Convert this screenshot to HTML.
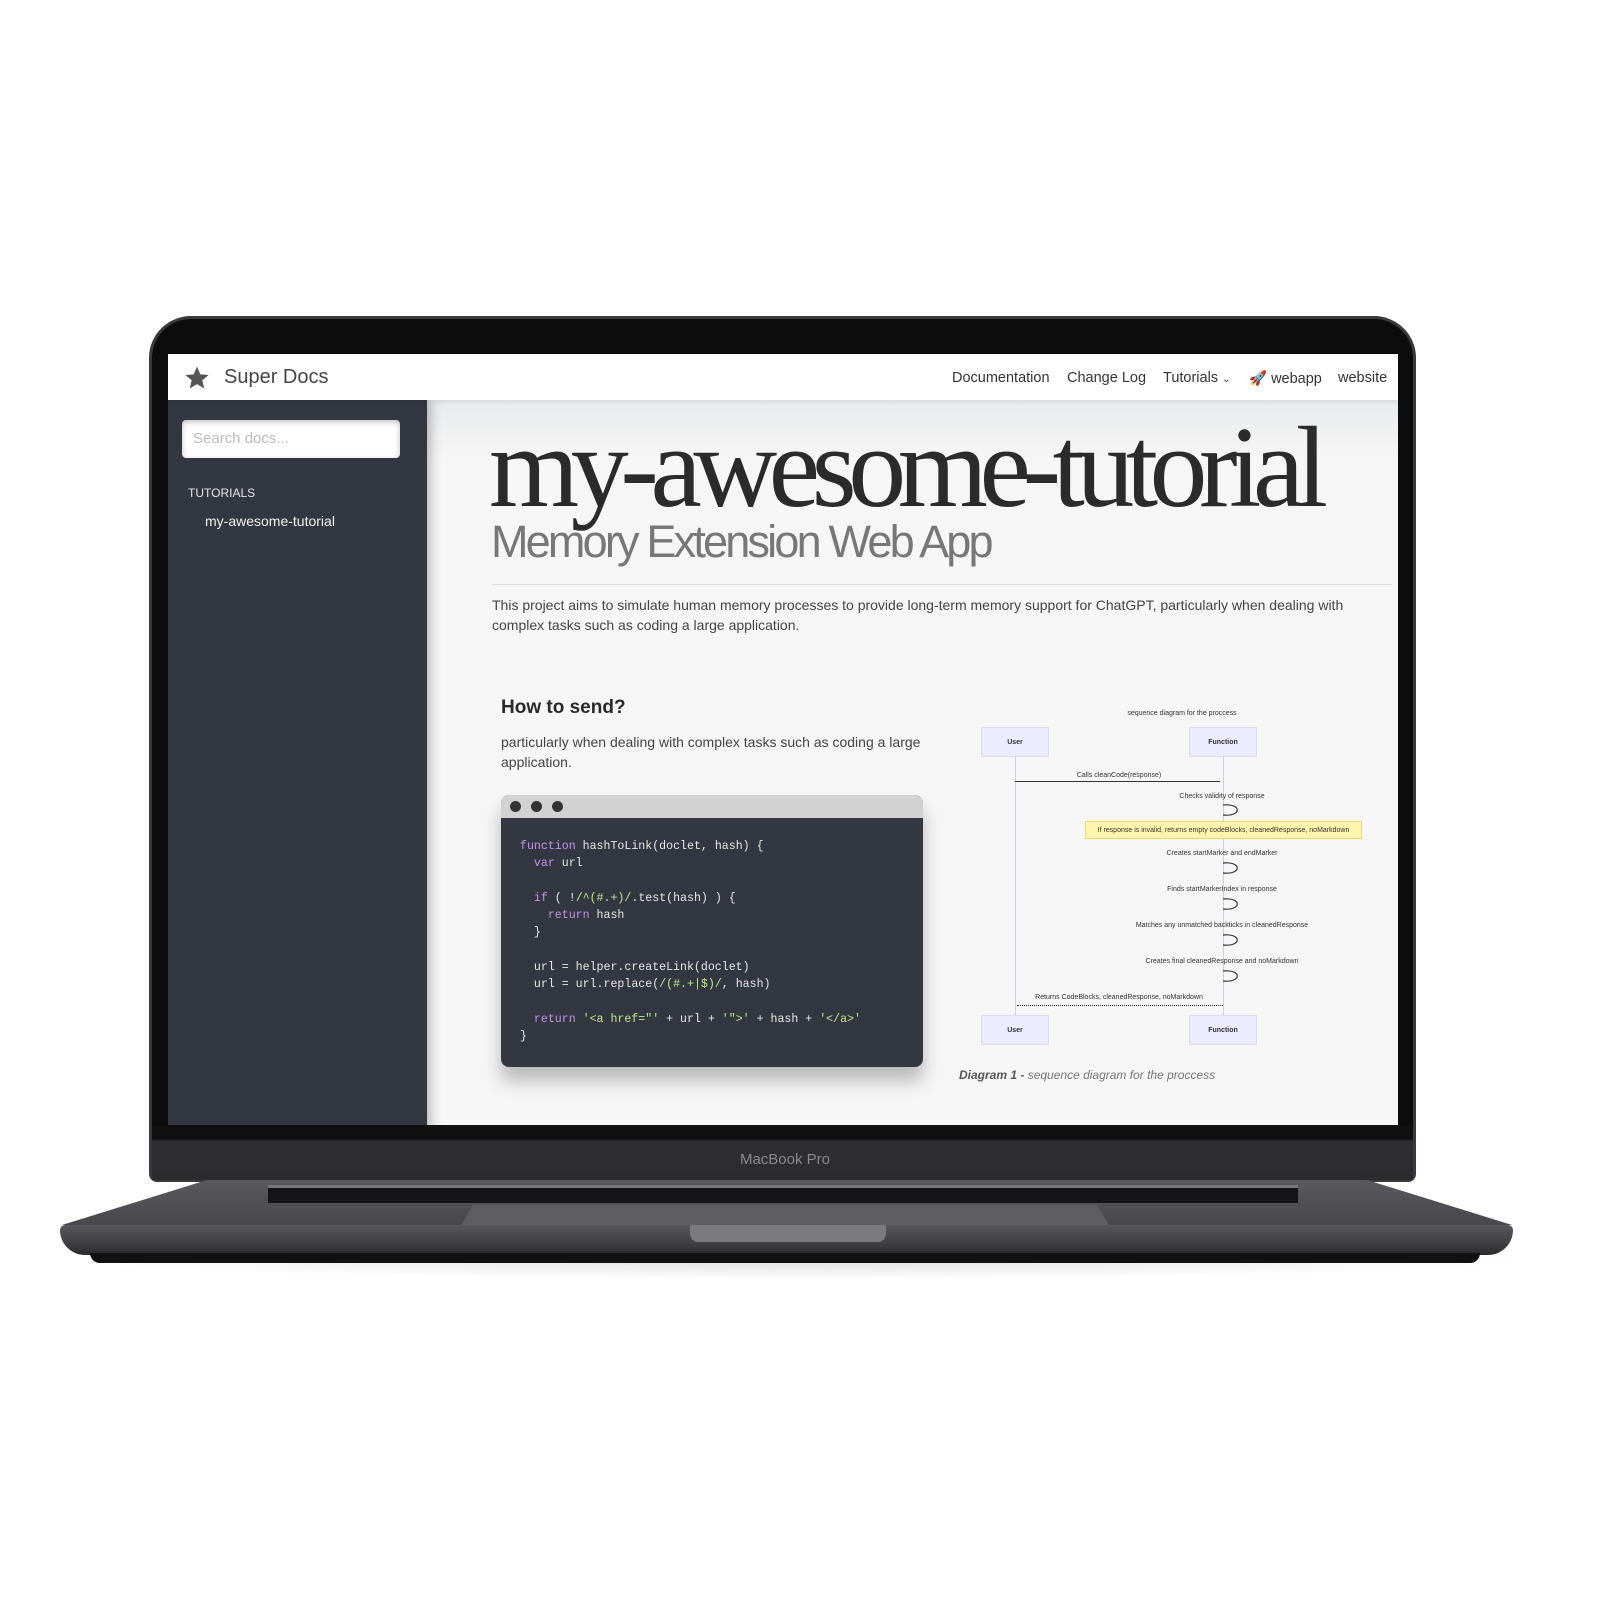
<!DOCTYPE html>
<html><head><meta charset="utf-8"><style>
*{margin:0;padding:0;box-sizing:border-box}
body{width:1600px;height:1600px;background:#fff;position:relative;overflow:hidden;font-family:"Liberation Sans",sans-serif}
.a{position:absolute}
.lid{left:149px;top:316px;width:1267px;height:866px;background:#0c0c0c;border-radius:42px 42px 8px 8px;border:3px solid #3a3a3c}
.chin{left:152px;top:1125px;width:1261px;height:55px;background:linear-gradient(#101010 0,#101010 14px,#2f2f31 16px,#2c2c2e);}
.screen{left:168px;top:354px;width:1230px;height:771px;background:#f6f6f6;overflow:hidden}
.nav{left:0;top:0;width:1230px;height:46px;background:#fff;box-shadow:0 2px 4px rgba(0,0,0,.08);z-index:2}
.side{left:0;top:46px;width:259px;height:730px;background:#333741;box-shadow:4px 0 10px rgba(0,0,0,.25);z-index:1}
.nv{top:16px;font-size:14.5px;color:#333}
.code{font-family:"Liberation Mono",monospace;font-size:11.6px;color:#e8e8e8;white-space:pre;line-height:17.3px}
.k{color:#c792ea}.s{color:#c3e88d}
.dl{font-size:7px;color:#333;text-align:center;white-space:nowrap}
.bx{background:#ececff;border:1px solid #ddd9f5;font-size:7px;font-weight:bold;color:#333;display:flex;align-items:center;justify-content:center}
</style></head><body>
<div class="a" style="left:60px;top:1240px;width:1480px;height:40px;background:radial-gradient(ellipse at center,rgba(0,0,0,.12),rgba(0,0,0,0) 70%)"></div>
<div class="a lid"></div>
<div class="a chin"></div>
<div class="a" style="left:685px;top:1151px;width:200px;text-align:center;color:#8a8a8c;font-size:15px">MacBook Pro</div>
<!-- base -->
<div class="a" style="left:62px;top:1180px;width:1450px;height:45px;background:linear-gradient(#5a5a5e,#48484c);clip-path:polygon(10% 0,90% 0,100% 100%,0 100%)"></div>
<div class="a" style="left:268px;top:1185px;width:1030px;height:18px;background:#151517;border-top:3px solid #77777a"></div>
<div class="a" style="left:460px;top:1205px;width:650px;height:22px;background:#5d5d62;clip-path:polygon(2% 0,98% 0,100% 100%,0 100%)"></div>
<div class="a" style="left:60px;top:1225px;width:1453px;height:30px;background:linear-gradient(#58585c,#404044 60%,#2a2a2c);border-radius:6px 6px 30px 30px"></div>
<div class="a" style="left:690px;top:1225px;width:196px;height:17px;background:#7a7a7f;border-radius:0 0 8px 8px"></div>
<div class="a" style="left:90px;top:1253px;width:1390px;height:10px;background:#111;border-radius:0 0 60px 60px"></div>

<div class="a screen">
 <div class="a nav">
  <svg class="a" style="left:15px;top:11px" width="28" height="26" viewBox="0 0 24 24"><path d="M12 1.5l3.1 7.1 7.6.6-5.8 5 1.8 7.5L12 17.7l-6.7 4 1.8-7.5-5.8-5 7.6-.6z" fill="#555"/></svg>
  <div class="a" style="left:56px;top:12px;font-size:20px;color:#444">Super Docs</div>
  <div class="a nv" style="left:784px">Documentation</div>
  <div class="a nv" style="left:899px">Change Log</div>
  <div class="a nv" style="left:995px">Tutorials <span style="font-size:10px">&#8964;</span></div>
  <div class="a nv" style="left:1081px">🚀 webapp</div>
  <div class="a nv" style="left:1170px">website</div>
 </div>
 <div class="a side">
  <div class="a" style="left:14px;top:20px;width:218px;height:38px;background:#fff;border-radius:4px;box-shadow:inset 0 2px 6px rgba(0,0,0,.25);font-size:15px;color:#bbb;padding:10px 11px">Search docs...</div>
  <div class="a" style="left:20px;top:86px;color:#e6e6e6;font-size:12px">TUTORIALS</div>
  <div class="a" style="left:37px;top:113px;color:#f0f0f0;font-size:14px">my-awesome-tutorial</div>
 </div>
 <div class="a" style="left:259px;top:46px;width:979px;height:60px;background:linear-gradient(#e9eaec,#f6f6f6)"></div>
 <div class="a" style="left:321px;top:44px;font-family:'Liberation Serif',serif;font-size:116px;color:#2b2b2b;letter-spacing:-8.5px;white-space:nowrap;line-height:140px">my-awesome-tutorial</div>
 <div class="a" style="left:323px;top:162px;font-size:45px;color:#777;letter-spacing:-2.8px;white-space:nowrap">Memory Extension Web App</div>
 <div class="a" style="left:324px;top:230px;width:900px;height:1px;background:#ddd"></div>
 <div class="a" style="left:324px;top:241px;font-size:14px;color:#444;line-height:20px;width:880px">This project aims to simulate human memory processes to provide long-term memory support for ChatGPT, particularly when dealing with complex tasks such as coding a large application.</div>
 <div class="a" style="left:333px;top:343px;font-size:19px;font-weight:bold;color:#2a2a2a">How to send?</div>
 <div class="a" style="left:333px;top:378px;font-size:14px;color:#444;line-height:20px;width:430px">particularly when dealing with complex tasks such as coding a large application.</div>
 <div class="a" style="left:333px;top:441px;width:422px;height:272px;background:#333741;border-radius:8px;overflow:hidden;box-shadow:0 14px 18px rgba(0,0,0,.25)">
  <div style="height:23px;background:#d2d2d2;position:relative">
   <div class="a" style="left:9px;top:6px;width:11px;height:11px;border-radius:50%;background:#333"></div>
   <div class="a" style="left:30px;top:6px;width:11px;height:11px;border-radius:50%;background:#333"></div>
   <div class="a" style="left:51px;top:6px;width:11px;height:11px;border-radius:50%;background:#333"></div>
  </div>
  <div class="code a" style="left:19px;top:43px"><span class="k">function</span> hashToLink(doclet, hash) {
  <span class="k">var</span> url

  <span class="k">if</span> ( !<span class="s">/^(#.+)/</span>.test(hash) ) {
    <span class="k">return</span> hash
  }

  url = helper.createLink(doclet)
  url = url.replace(<span class="s">/(#.+|$)/</span>, hash)

  <span class="k">return</span> <span class="s">'&lt;a href="'</span> + url + <span class="s">'"&gt;'</span> + hash + <span class="s">'&lt;/a&gt;'</span>
}</div>
 </div>
 <!-- diagram -->
 <div class="a dl" style="left:914px;top:356px;width:200px">sequence diagram for the proccess</div>
 <div class="a bx" style="left:813px;top:373px;width:68px;height:30px">User</div>
 <div class="a bx" style="left:1021px;top:373px;width:68px;height:30px">Function</div>
 <div class="a bx" style="left:813px;top:661px;width:68px;height:30px">User</div>
 <div class="a bx" style="left:1021px;top:661px;width:68px;height:30px">Function</div>
 <div class="a" style="left:847px;top:403px;width:1px;height:258px;background:#cfc8f0"></div>
 <div class="a" style="left:1055px;top:403px;width:1px;height:258px;background:#cfc8f0"></div>
 <div class="a dl" style="left:851px;top:418px;width:200px">Calls cleanCode(response)</div>
 <div class="a" style="left:847px;top:427px;width:205px;height:1px;background:#333"></div>
 <div class="a dl" style="left:954px;top:439px;width:200px">Checks validity of response</div>
 <div class="a" style="left:917px;top:467px;width:277px;height:18px;background:#fff5ad;border:1px solid #e6d97a;font-size:7px;color:#333;display:flex;align-items:center;justify-content:center;white-space:nowrap">If response is invalid, returns empty codeBlocks, cleanedResponse, noMarkdown</div>
 <div class="a dl" style="left:954px;top:496px;width:200px">Creates startMarker and endMarker</div>
 <div class="a dl" style="left:954px;top:532px;width:200px">Finds startMarkerIndex in response</div>
 <div class="a dl" style="left:934px;top:568px;width:240px">Matches any unmatched backticks in cleanedResponse</div>
 <div class="a dl" style="left:934px;top:604px;width:240px">Creates final cleanedResponse and noMarkdown</div>
 <div class="a dl" style="left:851px;top:640px;width:200px">Returns CodeBlocks, cleanedResponse, noMarkdown</div>
 <div class="a" style="left:849px;top:651px;width:206px;height:0;border-top:1px dotted #333"></div>
 <svg class="a" style="left:1052px;top:448px" width="30" height="180" viewBox="0 0 30 180">
  <g fill="none" stroke="#333" stroke-width="1.2">
   <path d="M3 3 C22 1 22 15 3 13"/><path d="M3 61 C22 59 22 73 3 71"/><path d="M3 97 C22 95 22 109 3 107"/><path d="M3 133 C22 131 22 145 3 143"/><path d="M3 169 C22 167 22 181 3 179"/>
  </g>
 </svg>
 <div class="a" style="left:791px;top:714px;font-size:12px;color:#777;font-style:italic;white-space:nowrap"><b style="color:#555">Diagram 1 -</b> sequence diagram for the proccess</div>
</div>
</body></html>
